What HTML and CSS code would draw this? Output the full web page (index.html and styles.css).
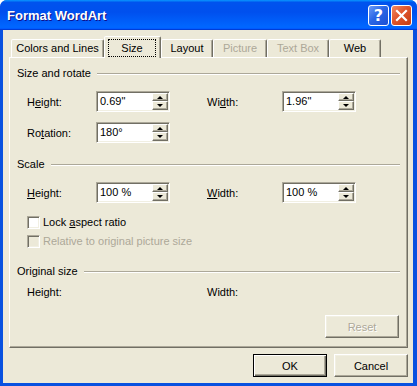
FILE: index.html
```html
<html>
<head>
<link rel="stylesheet" href="styles.css">
</head>
<body>
<div class="window">
  <div class="titlebar">
    <span class="title">Format WordArt</span>
    <div class="tb-btn help">?</div>
    <div class="tb-btn close">
      <svg width="13" height="13" viewBox="0 0 13 13"><path d="M2 2 L11 11 M11 2 L2 11" stroke="#fff" stroke-width="2.2" stroke-linecap="square"/></svg>
    </div>
  </div>

  <div class="client">
    <div class="tabs">
      <div class="tab tab-colors">Colors and Lines</div>
      <div class="tab selected tab-size"><span class="focus">Size</span></div>
      <div class="tab tab-layout">Layout</div>
      <div class="tab off tab-picture">Picture</div>
      <div class="tab off tab-textbox">Text Box</div>
      <div class="tab tab-web">Web</div>
    </div>

    <div class="panel">
      <div class="group-head"><span>Size and rotate</span><i class="etch"></i></div>
      <div class="field-row first">
        <span>H<u>e</u>ight:</span>
        <div class="spin"><span class="spin-value">0.69"</span><div class="spin-btns"><span class="sb up"></span><span class="sb down"></span></div></div>
        <span></span>
        <span>Wi<u>d</u>th:</span>
        <div class="spin"><span class="spin-value">1.96"</span><div class="spin-btns"><span class="sb up"></span><span class="sb down"></span></div></div>
      </div>
      <div class="field-row second">
        <span>Ro<u>t</u>ation:</span>
        <div class="spin"><span class="spin-value">180°</span><div class="spin-btns"><span class="sb up"></span><span class="sb down"></span></div></div>
      </div>

      <div class="group-head scale-head"><span>Scale</span><i class="etch"></i></div>
      <div class="field-row first">
        <span><u>H</u>eight:</span>
        <div class="spin"><span class="spin-value">100 %</span><div class="spin-btns"><span class="sb up"></span><span class="sb down"></span></div></div>
        <span></span>
        <span><u>W</u>idth:</span>
        <div class="spin"><span class="spin-value">100 %</span><div class="spin-btns"><span class="sb up"></span><span class="sb down"></span></div></div>
      </div>
      <div class="check lock"><span class="box"></span><span>Lock <u>a</u>spect ratio</span></div>
      <div class="check off relative"><span class="box"></span><span>Relative to original picture size</span></div>

      <div class="group-head orig-head"><span>Original size</span><i class="etch"></i></div>
      <div class="orig-row">
        <span>Height:</span>
        <span>Width:</span>
      </div>

      <div class="reset-row">
        <div class="btn off">Reset</div>
      </div>
    </div>

    <div class="actions">
      <div class="btn default">OK</div>
      <div class="btn">Cancel</div>
    </div>
  </div>
</div>
</body>
</html>
```

FILE: styles.css
```css
/* page */
html, body {
  margin: 0;
}

body {
  width: 417px;
  height: 386px;
  background: #fff;
  font-family: "Liberation Sans", Arial, sans-serif;
  font-size: 11px;
  color: #000;
}

/* window frame */
.window {
  width: 417px;
  height: 386px;
  display: flex;
  flex-direction: column;
  background: #0851e0;
  border-radius: 7px 7px 0 0;
  overflow: hidden;
}

.titlebar {
  height: 30px;
  flex: none;
  display: flex;
  align-items: center;
  padding: 0 5px 0 7px;
  box-sizing: border-box;
  background: linear-gradient(to bottom, #0997ff 0%, #0053ee 8%, #0050ee 40%, #0066ff 88%, #0066ff 93%, #005bff 95%, #003dd7 96%, #003dd7 100%);
}

.title {
  flex: 1;
  color: #fff;
  font-weight: bold;
  font-size: 13px;
  text-shadow: 1px 1px #0f1089;
  margin-top: 1px;
}

.tb-btn {
  width: 21px;
  height: 21px;
  box-sizing: border-box;
  border: 1px solid #fff;
  border-radius: 3px;
  margin-left: 2px;
  display: flex;
  align-items: center;
  justify-content: center;
  color: #fff;
}

.help {
  background: linear-gradient(135deg, #6b9bf7 0%, #2a66e6 45%, #1c4fd4 100%);
  font-weight: bold;
  font-size: 16px;
  font-family: "DejaVu Sans", sans-serif;
}

.close {
  background: linear-gradient(135deg, #f08a62 0%, #e0552c 45%, #c43c12 100%);
}

/* client area */
.client {
  flex: 1;
  margin: 0 4px 3px 3px;
  padding: 6px 5px 6px 6px;
  background: #ece9d8;
  display: flex;
  flex-direction: column;
}

/* tab strip */
.tabs {
  height: 21px;
  display: flex;
  align-items: flex-end;
  padding-left: 2px;
  position: relative;
  z-index: 1;
}

.tab {
  box-sizing: border-box;
  height: 18px;
  border: 1px solid;
  border-bottom: 0;
  border-color: #fff #716f64 transparent #fff;
  border-radius: 2px 2px 0 0;
  box-shadow: inset -1px 0 #aca899;
  background: #ece9d8;
  text-align: center;
  line-height: 17px;
  white-space: nowrap;
}

.tab.off {
  color: #aca899;
}

.tab.selected {
  height: 22px;
  margin-bottom: -1px;
  padding: 2px 4px 1px 3px;
}

.tab .focus {
  display: block;
  height: 100%;
  box-sizing: border-box;
  border: 1px dotted #000;
  line-height: 16px;
}

.tab-colors { width: 93px; }
.tab-size { width: 57px; }
.tab-layout { width: 52px; }
.tab-picture { width: 54px; }
.tab-textbox { width: 62px; }
.tab-web { width: 52px; }

/* tab page */
.panel {
  flex: none;
  height: 291px;
  box-sizing: border-box;
  border: 1px solid;
  border-color: #fff #716f64 #716f64 #fff;
  box-shadow: inset -1px -1px #aca899;
  padding: 9px 7px 0 7px;
}

.group-head {
  height: 13px;
  line-height: 13px;
  display: flex;
  align-items: center;
}

.group-head .etch {
  flex: 1;
  height: 0;
  margin-left: 6px;
  border-top: 1px solid #aca899;
  border-bottom: 1px solid #fff;
}

.scale-head { margin-top: 15px; }
.orig-head { margin-top: 17px; }

.field-row {
  display: grid;
  grid-template-columns: 69px 74px 37px 75px 74px;
  align-items: center;
  height: 21px;
  margin-left: 10px;
}

.field-row.first { margin-top: 11px; }
.field-row.second { margin-top: 10px; }

/* spin edit */
.spin {
  display: flex;
  height: 21px;
  box-sizing: border-box;
  border: 1px solid;
  border-color: #aca899 #fff #fff #aca899;
  box-shadow: inset 1px 1px #716f64, inset -1px -1px #f1efe2;
  padding: 1px;
  background: #fff;
}

.spin-value {
  flex: 1;
  padding-left: 2px;
  line-height: 17px;
}

.spin-btns {
  width: 16px;
  display: flex;
  flex-direction: column;
}

.sb {
  box-sizing: border-box;
  border: 1px solid;
  border-color: #fff #716f64 #716f64 #fff;
  box-shadow: inset -1px -1px #aca899;
  background: #ece9d8;
  display: flex;
  align-items: center;
  justify-content: center;
}

.sb.up { height: 8px; }
.sb.down { height: 9px; }

.sb::after {
  content: "";
  width: 0;
  height: 0;
  border-left: 3px solid transparent;
  border-right: 3px solid transparent;
}

.sb.up::after { border-bottom: 3px solid #000; }
.sb.down::after { border-top: 3px solid #000; }

/* check boxes */
.check {
  display: flex;
  align-items: center;
  gap: 3px;
  height: 14px;
  margin-left: 10px;
}

.check.lock { margin-top: 12px; }
.check.relative { margin-top: 5px; }

.check .box {
  width: 13px;
  height: 13px;
  box-sizing: border-box;
  border: 1px solid;
  border-color: #aca899 #fff #fff #aca899;
  box-shadow: inset 1px 1px #716f64, inset -1px -1px #f1efe2;
  background: #fff;
}

.check.off {
  color: #aca899;
}

.check.off .box {
  background: #ece9d8;
}

.orig-row {
  display: grid;
  grid-template-columns: 180px auto;
  height: 13px;
  line-height: 13px;
  margin: 8px 0 0 10px;
}

.reset-row {
  display: flex;
  justify-content: flex-end;
  margin-top: 16px;
  padding-right: 1px;
}

/* push buttons */
.btn {
  width: 74px;
  height: 23px;
  box-sizing: border-box;
  border: 1px solid;
  border-color: #fff #716f64 #716f64 #fff;
  box-shadow: inset -1px -1px #aca899, inset 1px 1px #f1efe2;
  background: #ece9d8;
  display: flex;
  align-items: center;
  justify-content: center;
}

.btn.off {
  color: #aca899;
  text-shadow: 1px 1px #fff;
}

.btn.default {
  border-color: #000;
  box-shadow: inset 1px 1px #fff, inset -1px -1px #716f64, inset -2px -2px #aca899;
}

.actions {
  display: flex;
  justify-content: flex-end;
  gap: 7px;
  margin-top: 6px;
}
```
